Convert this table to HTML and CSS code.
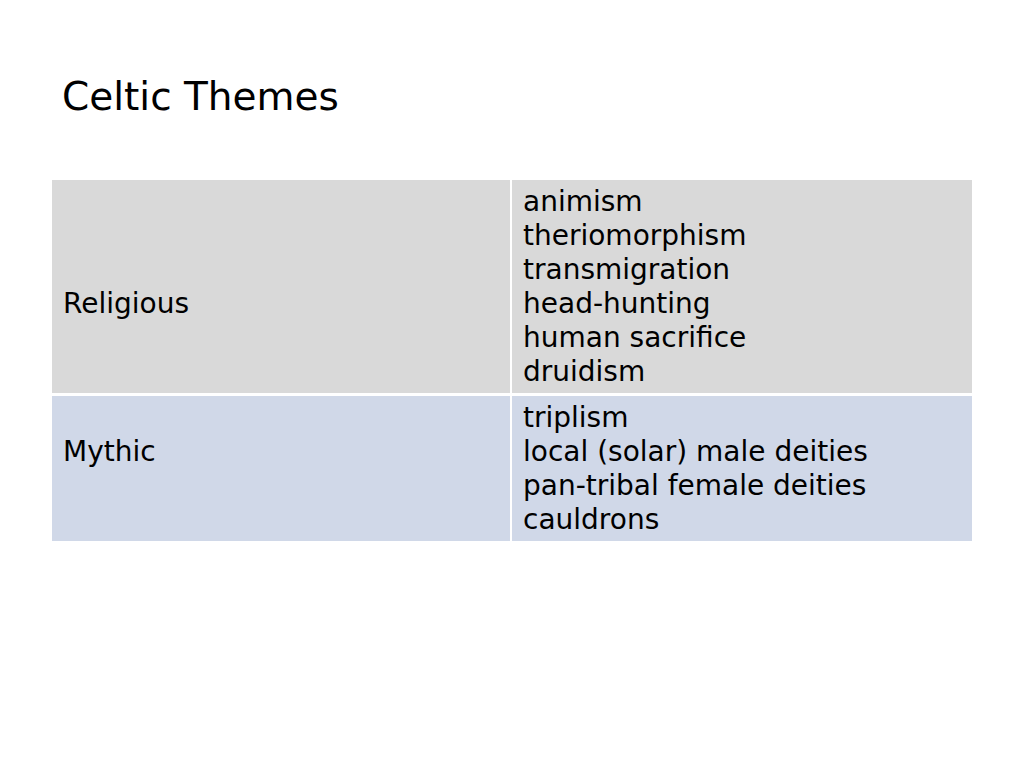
FILE: index.html
```html
<!DOCTYPE html>
<html>
<head>
<meta charset="utf-8">
<link rel="stylesheet" href="styles.css">
</head>
<body>
<div class="slide">
  <h1 class="title">Celtic Themes</h1>
  <div class="table">
    <div class="row row-grey">
      <div class="cell cell-label label-religious">Religious</div>
      <div class="cell cell-list">
        <div>animism</div>
        <div>theriomorphism</div>
        <div>transmigration</div>
        <div>head-hunting</div>
        <div>human sacrifice</div>
        <div>druidism</div>
      </div>
    </div>
    <div class="row row-blue">
      <div class="cell cell-label label-mythic">Mythic</div>
      <div class="cell cell-list">
        <div>triplism</div>
        <div>local (solar) male deities</div>
        <div>pan-tribal female deities</div>
        <div>cauldrons</div>
      </div>
    </div>
  </div>
</div>
</body>
</html>
```

FILE: styles.css
```css
html, body {
  margin: 0;
  padding: 0;
  background: #ffffff;
}
.slide {
  width: 1024px;
  height: 768px;
  font-family: "DejaVu Sans", Verdana, sans-serif;
  color: #000;
  padding: 73px 52px 0 52px;
  box-sizing: border-box;
}
.title {
  margin: 0 0 0 10px;
  font-weight: normal;
  font-size: 39px;
  line-height: 48px;
  height: 107px;
}
.table {
  display: flex;
  flex-direction: column;
  gap: 3px;
  width: 920px;
}
.row {
  display: grid;
  grid-template-columns: 458px 1fr;
  gap: 2px;
}
.row-grey .cell { background: #d9d9d9; }
.row-blue .cell { background: #d0d8e8; }
.cell {
  font-size: 28px;
  line-height: 34px;
  padding: 5px 10px 4px 11px;
}
.label-religious {
  padding-top: 107px;
}
.label-mythic {
  padding-top: 39px;
}
```
